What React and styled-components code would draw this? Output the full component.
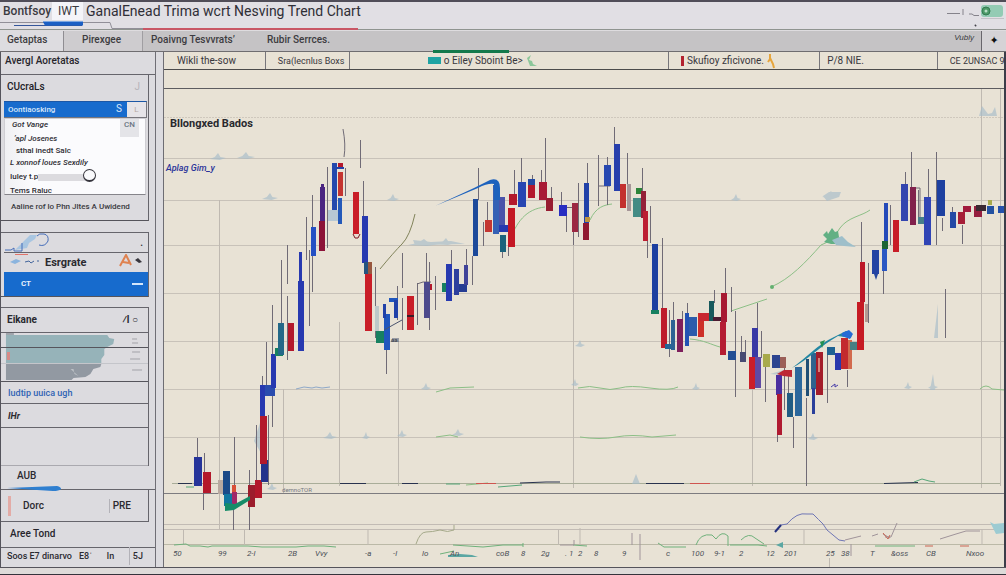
import React from "react";
import styled, { createGlobalStyle, css } from "styled-components";

const Global = createGlobalStyle`
  * { box-sizing: border-box; }
  body { margin: 0; background: #dcdbdf; font-family: "Liberation Sans", Arial, sans-serif; color: #3a3a40; }
  button, input, select { font: inherit; color: inherit; margin: 0; padding: 0; border: 0; background: none; text-align: left; }
`;

const Window = styled.div`
  display: flex;
  flex-direction: column;
  min-height: 100vh;
  border-top: 2px solid #504d58;
  border-bottom: 1px solid #34333c;
`;

const TitleBar = styled.header`
  position: relative;
  display: flex;
  align-items: flex-start;
  height: 28px;
  background: #e1dfe4;
  border-bottom: 1px solid #8f9490;
  white-space: nowrap;
`;

const Brand = styled.span`
  padding: 1px 0 0 3px;
  width: 52px;
  font: 12px/16px Roboto, sans-serif;
  font-weight: 500;
`;

const BrandTag = styled.span`
  width: 31px;
  padding: 1px 0 0 6px;
  height: 18px;
  background: #f4f4f8;
  font: 12px/16px Roboto, sans-serif;
`;

const Title = styled.h1`
  margin: 0 auto 0 3px;
  padding-top: 1px;
  font: 400 14px/17px Roboto, sans-serif;
  color: #2f2e36;
`;

const Underline = styled.svg`
  position: absolute;
  left: 0;
  bottom: -1px;
`;

const StatusArt = styled.svg`
  display: block;
`;

const NavBar = styled.nav`
  position: relative;
  display: flex;
  height: 22px;
  background: #c5c3c5;
  border-top: 1px solid #dedcdf;
  border-bottom: 1px solid #6f6d70;
`;

const NavTab = styled.button`
  flex: none;
  width: ${(p) => p.$w}px;
  padding-left: ${(p) => p.$pad}px;
  font: 500 10px/14px Roboto, sans-serif;
  padding-bottom: 3px;
  color: #3d3c41;
  white-space: nowrap;
  ${(p) =>
    p.$active &&
    css`
      background: #dddce0;
      border-right: 1px solid #8f8d92;
    `}
  ${(p) =>
    p.$divided &&
    css`
      background: #cecccf;
      border-right: 1px solid #a09ea2;
    `}
`;

const NavNote = styled.span`
  margin-left: auto;
  padding-right: 7px;
  font: italic 8px/14px "Liberation Sans", sans-serif;
`;

const NavAction = styled.button`
  width: 25px;
  background: #d5d3d6;
  border-left: 1px solid #68666c;
  text-align: center;
  font: 11px/16px "DejaVu Sans", sans-serif;
  color: #111;
`;

const NavAccent = styled.i`
  position: absolute;
  left: 43%;
  bottom: -2px;
  width: 76px;
  height: 3px;
  background: #14794c;
`;

const Body = styled.div`
  display: flex;
  flex: 1;
  align-items: stretch;
`;

const Sidebar = styled.aside`
  flex: 0 0 156px;
  border-left: 1px solid #55545c;
  border-right: 1px solid #6f6e75;
  background: #dcdbdf;
`;

const SideTitle = styled.h2`
  margin: 0;
  height: ${(p) => p.$h}px;
  padding: ${(p) => p.$pt}px 0 0 ${(p) => p.$pl}px;
  border-bottom: 1px solid #66656c;
  font: 500 ${(p) => p.$size || 10}px/14px Roboto, sans-serif;
  color: #26252b;
  white-space: nowrap;
`;

const Panel = styled.section`
  margin: 0 6px ${(p) => p.$gap || 0}px 0;
  padding-left: ${(p) => p.$pl || 0}px;
  border-right: 1px solid #66656c;
  ${(p) => p.$top && css`border-top: 1px solid #66656c;`}
  ${(p) => p.$bottom && css`border-bottom: 1px solid #55545b;`}
`;

const PanelHead = styled.h3`
  margin: 0;
  height: 26px;
  padding: 5px 8px 0 3px;
  display: flex;
  justify-content: space-between;
  font: 500 10px/14px Roboto, sans-serif;
  color: #222127;
`;

const Faint = styled.span`
  color: #b6b4ba;
  font-weight: 400;
`;

const PickRow = styled.div`
  display: flex;
  height: 17px;
  margin-right: 1px;
  border: 1px solid #77767c;
  border-left: 0;
  border-top-color: #1b57a6;
  background: #e6e4e8;
`;

const Pick = styled.select`
  appearance: none;
  flex: 0 0 109px;
  background: #176bcd;
  color: #d9e8fa;
  font: 8px/14px Roboto, sans-serif;
  font-weight: 500;
  padding-left: 4px;
`;

const PickKey = styled.span`
  width: 14px;
  padding-left: 3px;
  background: #176bcd;
  color: #d9e8fa;
  font: 10px/14px Roboto, sans-serif;
`;

const PickBtn = styled.button`
  flex: 1;
  text-align: center;
  font-size: 8px;
  color: #b5a8a4;
`;

const Options = styled.ul`
  margin: 0 2px 0 0;
  padding: 0 0 0 5px;
  height: 77px;
  list-style: none;
  background: linear-gradient(90deg, #f0f0f3, #fbfbfd 20%);
  border: 1px solid #cfced3;
  border-bottom-color: #85848a;
`;

const Option = styled.li`
  display: flex;
  justify-content: space-between;
  height: ${(p) => p.$h || 12}px;
  padding-left: ${(p) => p.$in || 0}px;
  font: 500 8px/12px Roboto, sans-serif;
  color: #2e2d33;
  white-space: nowrap;
`;

const OptionButton = styled.button`
  white-space: nowrap;
  font-style: ${(p) => (p.$it ? "italic" : "normal")};
  height: 12px;
`;

const OptionTag = styled.span`
  width: 19px;
  height: 18px;
  margin-right: 6px;
  padding-left: 4px;
  background: #e4e4e8;
  color: #6b7683;
`;

const Slider = styled.span`
  flex: 1;
  margin: 3px 55px 0 0;
  height: 7px;
  background: #dcdbdf;
  position: relative;
  &::after {
    content: "";
    position: absolute;
    right: -6px;
    top: -5px;
    width: 11px;
    height: 10px;
    border: 1px solid #35343c;
    border-bottom-width: 2px;
    border-radius: 50%;
    background: #fafafc;
  }
`;

const Note = styled.p`
  margin: 0;
  height: 25px;
  padding: 6px 0 0 7px;
  font: 500 8px/12px Roboto, sans-serif;
  white-space: nowrap;
`;

const Line = styled.div`
  position: relative;
  display: flex;
  align-items: center;
  height: ${(p) => p.$h}px;
  padding: 0 ${(p) => p.$pr || 5}px ${(p) => p.$pb || 0}px ${(p) => p.$pl || 2}px;
  white-space: nowrap;
  border-bottom: 1px solid ${(p) => p.$line || "#66656c"};
  color: #2b2a30;
  font: ${(p) => (p.$bold ? 700 : 500)} ${(p) => p.$size || 10}px/14px Roboto, sans-serif;
`;

const Streak = styled.svg`
  position: absolute;
  left: 6px;
  bottom: -4px;
`;

const Push = styled.span`
  margin-left: auto;
`;

const ActiveItem = styled.button`
  display: flex;
  justify-content: space-between;
  width: 100%;
  height: 23px;
  padding: 0 5px 2px 17px;
  align-items: center;
  background: #176bcd;
  color: #e6f0fc;
  font: 700 8px/12px Roboto, sans-serif;
`;

const Volume = styled.svg`
  display: block;
  width: 100%;
  height: 49px;
`;

const SideLink = styled.a`
  color: #2f63b4;
  text-decoration: none;
  font: 500 9px/14px Roboto, sans-serif;
`;

const Cell = styled.button`
  padding: ${(p) => p.$pad || "0"};
  white-space: nowrap;
  border-left: ${(p) => (p.$ruled ? "1px solid #b3b2b8" : "0")};
`;

const Main = styled.main`
  flex: 1;
  min-width: 0;
  margin-left: 7px;
  border-left: 1px solid #6e6d73;
  border-right: 2px solid #3c3d49;
  background: #e8e2d5;
`;

const SubTabs = styled.div`
  display: flex;
  height: 18px;
  border-bottom: 1px solid #4c4b4b;
`;

const SubTab = styled.button`
  display: flex;
  align-items: center;
  flex: 0 0 ${(p) => p.$share}%;
  min-width: 0;
  gap: 3px;
  padding-left: ${(p) => p.$pad}px;
  border-left: ${(p) => (p.$ruled ? "1px solid #77757a" : "0")};
  font: 10px/14px Roboto, sans-serif;
  font-size: ${(p) => p.$size || 10}px;
  white-space: nowrap;
  color: #38373d;
`;

const Chip = styled.i`
  width: ${(p) => p.$w}px;
  height: ${(p) => p.$h}px;
  background: ${(p) => p.$c};
`;

const ToolGap = styled.div`
  height: 19px;
  border-bottom: 1px solid #5d5c60;
`;

const Chart = styled.svg`
  display: block;
  width: 100%;
  height: auto;
  font-family: Roboto, sans-serif;
`;

const Footer = styled.footer`
  height: 7px;
  border-top: 1px solid #55545b;
  background: #dedbd9;
`;

const B = "#2141a8";
const N = "#2739b0";
const R = "#b3182b";
const T = "#1f6293";
const G = "#178060";

/* x, y, width, height, fill */
const candles = [
  [194, 457, 8, 29, "#26349a"], [203, 472, 8, 21, R], [223, 471, 7, 24, "#1b4a88"], [218, 480, 5, 14, "#b9a9a0"],
  [224, 494, 8, 12, "#1276a0"], [232, 485, 4, 8, "#d95037"], [232, 492, 5, 13, "#a02868"], [248, 485, 7, 22, "#9c1d2c"],
  [255, 480, 7, 18, R], [261, 460, 7, 22, "#23338c"], [260, 416, 7, 48, R], [260, 385, 5, 31, N], [265, 385, 10, 11, "#2a4cae"],
  [271, 354, 5, 34, N], [275, 348, 8, 8, G], [278, 323, 6, 32, "#246888"], [288, 323, 6, 28, R], [298, 281, 6, 70, N],
  [299, 252, 3, 30, N], [311, 227, 5, 29, "#2450c4"], [320, 187, 5, 34, "#4b2581"], [321, 184, 3, 5, "#4b2581"],
  [319, 221, 6, 30, "#8c1238"], [328, 210, 12, 11, "#b7c8d4"], [332, 163, 5, 47, "#2348ad"], [338, 163, 5, 5, R],
  [336, 167, 8, 2, B], [338, 172, 5, 24, "#c43430"], [338, 198, 4, 26, "#2459b9"], [353, 192, 6, 42, "#c91d27"],
  [362, 216, 6, 47, N], [364, 262, 4, 12, "#245480"], [368, 262, 4, 12, "#98573f"], [365, 274, 7, 57, "#c91e28"],
  [375, 306, 4, 25, "#bdc8c9"], [376, 331, 8, 12, G], [384, 314, 6, 36, "#2056bd"], [383, 304, 3, 14, B], [389, 298, 9, 4, "#2056bd"],
  [394, 300, 4, 18, B], [407, 296, 7, 34, "#c91e28"], [407, 315, 7, 2, "#3b1b26"], [424, 282, 6, 36, "#4d4a8c"], [430, 284, 2, 6, R],
  [442, 283, 6, 9, G], [446, 264, 6, 37, N], [454, 269, 5, 26, "#2e3f9e"], [459, 284, 8, 8, "#253c93"], [464, 265, 4, 20, "#404399"],
  [473, 199, 5, 57, "#1c499a"], [485, 220, 7, 12, "#c43732"], [493, 185, 6, 49, "#3561b5"], [499, 197, 6, 30, "#4a53aa"],
  [499, 225, 9, 7, N], [500, 235, 6, 17, "#1b627c"], [508, 208, 7, 39, "#c41724"], [509, 194, 8, 11, R], [518, 182, 8, 25, "#2746b2"],
  [528, 179, 7, 6, "#244aa2"], [528, 185, 7, 13, R], [539, 182, 8, 18, "#a81a35"], [546, 198, 7, 13, "#971c31"],
  [559, 205, 8, 11, "#272dc2"], [572, 203, 6, 29, "#9b2742"], [584, 183, 5, 40, B], [585, 217, 5, 5, "#bd9440"],
  [583, 223, 6, 17, "#90192f"], [604, 165, 7, 21, "#2748b0"], [614, 144, 6, 47, "#273fac"], [620, 184, 6, 24, "#c3302e"],
  [627, 184, 4, 27, "#a69698"], [633, 198, 8, 19, "#438b84"], [636, 188, 6, 6, "#2c8439"], [641, 191, 5, 27, "#942038"],
  [643, 211, 5, 30, "#bc1f33"], [652, 244, 6, 69, "#1c3fa0"], [651, 310, 8, 4, G], [661, 308, 6, 40, "#bd1d2b"],
  [665, 344, 6, 5, "#246697"], [671, 320, 4, 30, "#2d6395"], [677, 319, 6, 33, "#7e1f5c"], [685, 313, 4, 33, "#2252b4"],
  [689, 317, 8, 19, "#2b5cab"], [698, 313, 6, 24, "#cd3029"], [699, 313, 11, 8, "#c82831"], [709, 301, 5, 20, "#17595c"],
  [713, 317, 9, 4, "#4b1a30"], [721, 293, 6, 29, "#a71a32"], [720, 322, 6, 33, "#b51d33"], [728, 351, 8, 9, "#234f94"],
  [740, 352, 6, 10, "#474a72"], [752, 328, 6, 29, "#3939a5"], [749, 357, 6, 32, "#cb1e29"], [755, 357, 6, 31, "#604aa4"],
  [763, 354, 7, 13, "#a8aa4c"], [772, 355, 8, 13, "#2c4490"], [780, 357, 6, 11, "#9b5f58"], [776, 375, 6, 20, "#4b2e9f"],
  [777, 394, 5, 41, "#b01a31"], [787, 393, 6, 24, "#215c83"], [795, 367, 7, 49, "#2c679c"], [806, 359, 3, 37, "#204e75"],
  [811, 353, 5, 36, "#2e638e"], [812, 388, 3, 26, "#2a3f9b"], [816, 352, 7, 43, "#a31c2a"], [818, 358, 2, 14, "#d8827a"],
  [827, 347, 8, 8, T], [835, 353, 6, 17, "#2938ad"], [841, 338, 7, 31, "#c32a2e"], [848, 340, 4, 29, "#d26a4d"], [850, 342, 7, 8, "#467f83"],
  [857, 302, 7, 48, "#c61b24"], [860, 262, 5, 40, "#bd1728"], [865, 304, 3, 18, "#b49a91"], [872, 250, 7, 24, "#2343a3"],
  [882, 243, 5, 28, "#2956c3"], [884, 203, 4, 38, "#244ab9"], [882, 241, 6, 8, "#1c6432"], [893, 220, 6, 32, "#c81d27"],
  [901, 184, 7, 37, "#3345af"], [910, 187, 6, 38, "#81214c"], [918, 217, 6, 7, "#467f8b"], [924, 197, 7, 48, "#3044b5"],
  [937, 180, 8, 36, "#1d40a0"], [950, 212, 6, 16, "#2449a5"], [958, 212, 7, 12, "#a61e37"], [963, 206, 8, 6, "#a1193c"],
  [974, 206, 8, 11, "#951f3f"], [976, 205, 10, 6, "#3a2831"], [987, 206, 7, 8, "#2351a1"], [988, 200, 4, 5, "#a7aa4d"],
  [998, 206, 6, 7, "#2450ac"],
];

/* x, top, bottom */
const wicks = [
  [197, 438, 457], [204, 453, 472], [203, 493, 510], [234, 437, 492], [233, 500, 530], [249, 470, 530], [256, 425, 480],
  [262, 376, 386], [272, 388, 427], [266, 342, 388], [268, 415, 485], [272, 305, 354], [281, 260, 323], [287, 245, 284],
  [287, 296, 360], [306, 217, 260], [309, 250, 326], [312, 195, 292], [327, 167, 248], [345, 168, 196], [360, 140, 168],
  [363, 181, 216], [375, 267, 338], [386, 350, 374], [397, 286, 320], [402, 253, 288], [402, 298, 330], [426, 253, 282],
  [429, 262, 330], [435, 276, 310], [417, 283, 325], [451, 250, 264], [466, 249, 265], [472, 256, 285], [478, 168, 200], [487, 202, 220],
  [483, 222, 246], [502, 250, 258], [508, 245, 256], [514, 170, 195], [521, 158, 182], [532, 175, 180], [541, 170, 184], [545, 138, 198],
  [551, 187, 200], [561, 192, 205], [566, 214, 232], [573, 230, 245], [578, 183, 237], [587, 163, 184], [598, 155, 206],
  [607, 157, 205], [614, 127, 190], [627, 153, 184], [642, 168, 192], [650, 206, 243], [647, 240, 258], [662, 238, 310],
  [669, 310, 357], [673, 302, 322], [682, 311, 320], [687, 303, 316], [714, 290, 303], [725, 268, 293], [731, 287, 312],
  [735, 311, 397], [741, 336, 352], [745, 340, 355], [757, 303, 328], [761, 331, 358], [765, 365, 402], [777, 430, 442], [784, 368, 410],
  [788, 376, 394], [793, 417, 448], [806, 398, 486], [822, 375, 395], [827, 355, 403], [847, 370, 387], [861, 222, 262], [868, 263, 323],
  [883, 270, 294], [890, 205, 245], [905, 172, 184], [911, 152, 188], [918, 190, 218], [928, 169, 197], [936, 152, 245], [942, 218, 231],
  [952, 207, 213], [962, 225, 244], [945, 289, 338],
];

const rows = [158, 200, 245, 293, 341, 389, 437];
const columns = [[219, 200, 529], [283, 389, 493], [339, 322, 486], [398, 341, 486], [573, 233, 488], [752, 389, 486], [981, 89, 488], [1000, 89, 486]];

const axis = [
  [173, "50"], [218, "99"], [247, "2-l"], [288, "2B"], [315, "Vvy"], [365, "-a"], [393, "-l"], [422, "lo"], [450, "An"], [496, "coB"],
  [521, "8"], [541, "2g"], [565, ". 1"], [578, "2"], [594, "8"], [622, "9"], [666, "c"], [691, "100"], [714, "9-1"], [739, "2"],
  [766, "12"], [784, "201"], [826, "25"], [841, "38"], [870, "T"], [891, "&oss"], [926, "CB"], [966, "Nxoo"],
];

const smudges = [
  [218, 158, 8], [246, 157, 9], [270, 198, 8], [393, 199, 6], [424, 244, 16], [446, 243, 9], [330, 437, 7], [458, 434, 6],
  [402, 435, 5], [736, 199, 5], [831, 196, 9], [696, 388, 4], [933, 387, 5], [908, 387, 4], [575, 384, 4], [580, 345, 5],
  [813, 438, 5], [272, 488, 5], [426, 388, 5], [366, 437, 4],
];

const greens = [
  "M436 392 L450 388 L474 387", "M436 437 l14 -2 l8 2", "M578 388 q12 -3 22 0 t20 0 t30 0 t28 -1", "M580 437 q20 3 36 0 t36 0 l24 -2",
  "M980 389 q6 -6 12 0 l12 1 l4 -3", "M466 485 l22 -2",
];

function StockChart() {
  return (
    <Chart viewBox="164 89 840 478" role="img" aria-label="Candlestick chart">
      <g stroke="#bfb9b1" fill="none">
        <path d="M164 117.500H1004" stroke="#cfc8bd" strokeDasharray="2 1" />
        {rows.map((y) => (
          <path key={y} d={`M164 ${y}.5H1004`} stroke="#c8c2b9" />
        ))}
        {columns.map(([x, a, b]) => (
          <path key={x} d={`M${x}.5 ${a}V${b}`} />
        ))}
        <path d="M172 483.500H1000" stroke="#a9ad99" />
        <path d="M164 524.500H1004M164 529.500H1004" stroke="#c2bbb4" />
        <path d="M164 544.500H1004" stroke="#bbb9a7" />
        <path d="M164 493.500H1004" stroke="#7d7c80" />
        <path d="M183.500 530V545M244.500 530V545M368 530V545M558.500 530V545M580 528V545M804 530V545M982 529V545M829.500 558V567" />
      </g>
      <g fill="#a7bdca" opacity="0.65">
        {smudges.map(([x, y, r]) => (
          <path key={`${x}-${y}`} d={`M${x - r} ${y + 1}l${r * 0.6} -2 l${r * 0.4} -4 l${r * 0.3} 4 l${r * 0.7} 1 l-${r * 0.8} 2z`} />
        ))}
        <path d="M979 116l3 -10 l6 8 l4 -1 l3 -6 l2 9z M934 338l4 -34 v34z M632 484l4 -10 l4 10z M930 390l3 -16 l2 16z M823 196l6 -4 h12 l-2 5 l-12 4z" />
        <path d="M254 441l6 -18 l2 32z M413 240l18 2 l20 -1 l14 3 l-50 1z M770 374l14 -4 l8 6z" />
      </g>
      <path d="M296 389l8 -2 8 1 4 -1 6 1 8 -1" stroke="#8ea8c8" fill="none" />
      <g fill="none" stroke="#8cbf86" strokeWidth="1">
        {greens.map((d) => (
          <path key={d} d={d} />
        ))}
        <path d="M509 243 C516 222 526 209 545 207M590 220 C596 207 604 205 612 204M690 339 C704 340 712 345 720 347M731 311l36 -12" />
        <path d="M771 287 C790 279 806 262 821 245 L832 240 L840 228 C848 217 862 216 870 210" />
      </g>
      <path d="M823 235l4 -4 1 3 4 -6 3 4 3 -1 1 6 5 5 -4 2 -9 0 -7 -2 3 -3z" fill="#62b084" />
      <path d="M832 240l10 -4 6 6 8 5 -12 -1 -8 -1z" fill="#9ebfca" />
      <circle cx="772" cy="287" r="2" fill="#62b070" />
      <path d="M178 483.500h14M340 483.500h26M402 483.500h16M520 483 l26 -1 h14M646 483.500h38M884 483.500l34 -1" stroke="#28324e" strokeWidth="1" fill="none" />
      <path d="M476 483.500h20M690 483.500h20" stroke="#cf5550" />
      <path d="M446 484h14M498 487l24 -2M914 482l8 -3 7 2 6 1M186 487h8" stroke="#55a678" fill="none" />
      <g stroke="#706b76" fill="none">
        {wicks.map(([x, a, b]) => (
          <path key={`${x}-${a}`} d={`M${x}.5 ${a}V${b}`} />
        ))}
        <path d="M343 129q3 16 1 28M417 284l6 -2h8M565 207.500h14M598 186h12M912 188h8v30" />
      </g>
      {candles.map(([x, y, w, h, c]) => (
        <rect key={`${x}-${y}`} x={x} y={y} width={w} height={h} fill={c} />
      ))}
      <path d="M777 374l7 -4 h8 v7 l-9 -1z" fill="#bd2735" />
      <path d="M874 274h4l-2 6z" fill="#26489f" />
      <path d="M225 503l10 1 15 -8 v4 l-16 10 -9 1z" fill="#168c68" />
      <path d="M435 206 L474 188 L490 180 Q500 177 500 188 V200 H494 L494 184 Q488 183 478 188z" fill="#1d62bd" />
      <path d="M792 368 C806 358 818 344 834 337 L846 331 L852 333 L851 338 L838 336 C820 346 808 360 792 368z" fill="#2387a3" />
      <path d="M842 333l7 -3 4 4 -3 5 -8 -3z" fill="#256bd4" />
      <path d="M820 342l5 -2 -3 8z" fill="#259053" />
      <path d="M380 269 Q394 252 402 244 T415 214" stroke="#81835a" strokeWidth="1" fill="none" />
      <path d="M353 234l2 4 h3 l2 -4" stroke="#7a1721" fill="#e9dcd2" />
      <path d="M384 330l18 -10M391 341h8M392 339h7" stroke="#4b546e" fill="none" />
      <path d="M831 387l4 -3 v3 l3 -2" stroke="#463aa8" fill="none" />
      <path d="M174 545l12 -1 4 2 h10 l8 1 4 -1 h36l14 1h34l12 -1h16 l12 1M453 545l30 2 20 -2h20M523 543v4M440 554l14 -3M573 545l14 1M658 543l6 4 h22M696 545q4 -12 16 -10 l4 4 q6 -9 12 -3 v10M730 545h28 l9 1M741 540q8 -8 14 -2 l9 6M875 546h40" stroke="#6fb17b" fill="none" />
      <path d="M416 544q4 -12 10 -12 t14 -2 q8 3 14 0 v-5" stroke="#a5a98a" fill="none" />
      <path d="M775 532l6 -7 6 -1 q10 -12 20 -10 l6 0 q6 6 10 10 l4 6 12 10 6 1" stroke="#6f76b5" fill="none" />
      <path d="M775 532l6 -7" stroke="#25317e" strokeWidth="2" />
      <path d="M560 545h14v-5M632 545v-12M640 560v-26M845 540l16 -4M890 538l-7 -4M872 536l6 -2M897 523l-6 14h-6M851 556v-12M940 539l16 -5 10 -3h14" stroke="#a0949a" fill="none" />
      <path d="M883 533l5 6 2 -4M925 546h8M960 546h9" stroke="#ca6552" fill="none" />
      <path d="M776 545l7 -3v6zM448 557v-2l12 -1 12 1 6 2z" fill="#5ba7a3" />
      <path d="M990 522l4 2 10 -1 v10 l-8 1z" fill="#9ccbd2" />
      <text x="170" y="127" fontSize="11" fontWeight="700" fill="#29292e">Bllongxed Bados</text>
      <text x="166" y="171" fontSize="9" fontWeight="500" fontStyle="italic" fill="#2b349a">Aplag Gim_y</text>
      <text x="391" y="342" fontSize="6" fill="#3b424c">aa</text>
      <text x="282" y="492" fontSize="6" fill="#777881">demnoTOR</text>
      {axis.map(([x, t]) => (
        <text key={x} x={x} y="556" fontSize="8" fontStyle="italic" fill="#4b5058">{t}</text>
      ))}
    </Chart>
  );
}

const options = [
  { label: "Got Vange", in: 2, h: 14, tag: "CN", it: true },
  { label: "’apl Josenes", in: 4, h: 12, it: true },
  { label: "sthal inedt Salc", in: 6, h: 12 },
  { label: "L xonnof loues Sexdily", h: 14, it: true },
  { label: "Iuley t.p", h: 14, slider: true },
  { label: "Tems Raluc", h: 10 },
];

export default function App() {
  return (
    <>
      <Global />
      <Window>
        <TitleBar>
          <Brand>Bontfsoy</Brand>
          <BrandTag>IWT</BrandTag>
          <Title>GanalEnead Trima wcrt Nesving Trend Chart</Title>
          <StatusArt width="66" height="26" viewBox="940 2 66 26" aria-hidden="true">
            <path d="M947 13.500h13M963 9v6M969 14h3l2 1.500h5" stroke="#85838b" fill="none" />
            <rect x="981" y="5" width="22" height="12" rx="3" fill="#93cbb4" />
            <circle cx="986" cy="11" r="4" fill="#4c9a68" stroke="#347a51" />
            <circle cx="986" cy="11" r="1.500" fill="#b8dfc7" />
            <path d="M981 18.500h23" stroke="#c2c1c7" />
            <path d="M975 26l1 -1" stroke="#44434b" strokeWidth="2" />
          </StatusArt>
          <Underline width="360" height="11" viewBox="0 19 360 11" aria-hidden="true">
            <path d="M0 22.500H110L112 28.500H358" stroke="#918f98" fill="none" />
            <path d="M14 25.500H82" stroke="#34569b" />
            <path d="M43 22H83V25.500H45z" fill="#1b5fc4" />
            <path d="M43 21.500H83" stroke="#7da6e0" />
            <path d="M143 29H358" stroke="#c95766" strokeWidth="2" />
          </Underline>
        </TitleBar>
        <NavBar>
          <NavTab $w={64} $pad={7} $active>Getaptas</NavTab>
          <NavTab $w={79} $pad={18} $divided>Pirexgee</NavTab>
          <NavTab $w={114} $pad={8}>Poaivng Tesvvrats’</NavTab>
          <NavTab $w={90} $pad={10}>Rubir Serrces.</NavTab>
          <NavNote>Vubly</NavNote>
          <NavAction aria-label="Add">✦</NavAction>
          <NavAccent />
        </NavBar>
        <Body>
          <Sidebar>
            <SideTitle $h={23} $pt={2} $pl={4}>Avergl Aoretatas</SideTitle>
            <Panel $gap={11} $pl={3} $bottom>
              <PanelHead>
                CUcraLs <Faint>J</Faint>
              </PanelHead>
              <PickRow>
                <Pick aria-label="Category">
                  <option>Oontiaosking</option>
                </Pick>
                <PickKey>S</PickKey>
                <PickBtn>L</PickBtn>
              </PickRow>
              <Options>
                {options.map((o) => (
                  <Option key={o.label} $h={o.h} $in={o.in}>
                    <OptionButton $it={o.it}>{o.label}</OptionButton>
                    {o.tag && <OptionTag>{o.tag}</OptionTag>}
                    {o.slider && <Slider />}
                  </Option>
                ))}
              </Options>
              <Note>Aaline rof lo Phn Jltes A Uwidend</Note>
            </Panel>
            <Panel $gap={10} $pl={3} $top $bottom>
              <Line $h={20} $pl={1}>
                <svg width="46" height="19" viewBox="4 233 46 19" aria-hidden="true">
                  <path d="M18 246l6 -6 5 -5 h7 l-2 4 -6 4 -2 5 -12 2z" fill="#a9c6e1" />
                  <path d="M36 236q2 -3 7 -2 t4 7 q-3 6 -9 4 M4 250h6l3 -2 v3 h8 v-8" stroke="#466eba" fill="none" />
                </svg>
                <Push>.</Push>
              </Line>
              <Line $h={20} $pl={1} $bold $size={11} $line="#176bcd">
                <svg width="40" height="18" viewBox="4 253 40 18" aria-hidden="true">
                  <path d="M14 253.500h13" stroke="#e1746b" />
                  <path d="M9 261l6 -3 5 2 -6 3z" fill="#8bb4de" />
                  <path d="M24 261l4 -1 2 2 3 -2M36 260h2" stroke="#41649c" fill="none" />
                </svg>
                Esrgrate
                <Push>
                  <svg width="24" height="14" viewBox="0 0 24 14" aria-hidden="true">
                    <path d="M1 12 L7 1 L12 11 M4 8 L10 9" stroke="#df8250" strokeWidth="2" fill="none" />
                    <path d="M16 6 l3 -2 4 4 -3 1z" fill="#38363d" />
                  </svg>
                </Push>
              </Line>
              <ActiveItem>
                CT <Chip $w={11} $h={2} $c="#d4e6fb" />
              </ActiveItem>
            </Panel>
            <Panel $top>
              <Line $h={25} $pl={6} $bold $size={10} $pr={10}>
                Eikane
                <Push>
                  <Cell>⁄l ○</Cell>
                </Push>
              </Line>
              <Volume viewBox="1 332 148 49" preserveAspectRatio="none" aria-hidden="true">
                <path d="M6 334H108l2 3 5 1-1 5-6 3-3 2v6l-3 4v5H6z" fill="#96b3b9" />
                <path d="M6 363H102l-1 3-7 2-3 5-5 3-12 1-2 2H6z" fill="#9299a2" />
                <path d="M1 346.500H149" stroke="#55545b" />
                <path d="M1 362.500H149" stroke="#c4c5ca" />
                <path d="M1 380.500H149" stroke="#55545b" />
                <path d="M7 351h3v8h-3z" fill="#d98a86" />
                <path d="M133 338h5M133 342h6M133 351h8M131 358h10M133 369h10" stroke="#a3a2a8" />
                <path d="M71 368h3l1 5 4 2z" fill="#bcc1c6" />
                <path d="M6 333h8" stroke="#66717b" fill="none" />
              </Volume>
              <Line $h={22} $pl={7}>
                <SideLink href="#more">Iudtip uuica ugh</SideLink>
              </Line>
              <Line $h={24} $pl={7} $bold $size={9}>
                <em>IHr</em>
              </Line>
              <Line $h={38} $line="#aaa9af" />
            </Panel>
            <Line $h={24} $pl={16} $pb={4} $size={10}>
              AUB
              <Streak width="56" height="8" viewBox="0 0 56 8" aria-hidden="true">
                <path d="M0 3 L50 1 Q54 2 54 4 Q52 6 46 6 L30 5z" fill="#2f7fd0" />
              </Streak>
            </Line>
            <Panel>
              <Line $h={32} $pl={7}>
                <Chip $w={3} $h={20} $c="#e3aba6" />
                <Cell $pad="0 0 0 12px">Dorc</Cell>
                <Push>
                  <Cell $pad="0 12px 0 3px" $ruled>PRE</Cell>
                </Push>
              </Line>
            </Panel>
            <SideTitle $h={26} $pt={5} $pl={9} $size={10}>Aree Tond</SideTitle>
            <Line $h={19} $pl={6} $pb={3} $line="transparent" $size={9} $pr={12}>
              <Cell>Soos E7 dinarvo</Cell>
              <Cell $pad="0 0 0 7px">E8ˈ</Cell>
              <Push>ln</Push>
              <Push>
                <Cell $pad="2px 0 2px 3px" $ruled>5J</Cell>
              </Push>
            </Line>
          </Sidebar>
          <Main>
            <SubTabs>
              <SubTab $share={12} $pad={13}>Wikli the-sow</SubTab>
              <SubTab $share={10} $pad={12} $ruled $size={9}>Sra(lecnlus Boxs</SubTab>
              <SubTab $share={38} $pad={78} $ruled>
                <Chip $w={13} $h={7} $c="#1fa3a3" />o Eiley Sboint Be&gt;
                <svg width="12" height="13" viewBox="0 0 12 13" aria-hidden="true">
                  <path d="M1 4l4 -3 -2 5 3 1 1 3 4 2 H4z" fill="#8cc79a" />
                </svg>
              </SubTab>
              <SubTab $share={18} $pad={12} $ruled>
                <Chip $w={3} $h={10} $c="#b3222f" />
                Skufioy zficivone.
                <svg width="9" height="16" viewBox="0 0 9 16" aria-hidden="true">
                  <path d="M3 1v5l-2 3M3 5l3 6 1 4" stroke="#e6a53c" strokeWidth="2" fill="none" />
                </svg>
              </SubTab>
              <SubTab $share={14} $pad={7} $ruled>P/8 NIE.</SubTab>
              <SubTab $share={8} $pad={12} $ruled $size={9}>CE 2UNSAC 9</SubTab>
            </SubTabs>
            <ToolGap />
            <StockChart />
          </Main>
        </Body>
        <Footer />
      </Window>
    </>
  );
}
